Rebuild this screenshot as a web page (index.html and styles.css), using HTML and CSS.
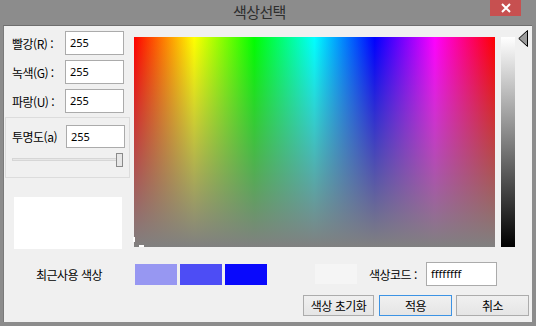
FILE: index.html
```html
<!DOCTYPE html>
<html lang="ko">
<head>
<meta charset="utf-8">
<link rel="stylesheet" href="styles.css">
</head>
<body>
<div class="window">
  <div class="titlebar">
    <div class="title">색상선택</div>
    <div class="close">
      <svg width="12" height="10" viewBox="0 0 12 10"><path d="M2 1 L10 9 M10 1 L2 9" stroke="#fff" stroke-width="2" fill="none"/></svg>
    </div>
  </div>
  <div class="content">
    <div class="top">
      <div class="leftcol">
        <div class="row"><span class="lbl">빨강(R) :</span><div class="input">255</div></div>
        <div class="row"><span class="lbl">녹색(G) :</span><div class="input">255</div></div>
        <div class="row"><span class="lbl">파랑(U) :</span><div class="input">255</div></div>
        <div class="group">
          <div class="grow"><span class="lbl">투명도(a)</span><div class="input small">255</div></div>
          <div class="slider"><div class="track"></div><div class="thumb"></div></div>
        </div>
        <div class="preview"></div>
      </div>
      <div class="spectrum">
        <div class="mark mark-v"></div>
        <div class="mark mark-h"></div>
      </div>
      <div class="graybar"></div>
      <div class="arrow">
        <svg width="11" height="18" viewBox="0 0 11 18"><polygon points="9.5,0.5 0.8,8.5 9.5,16.5" fill="#9a9a9a" stroke="#000" stroke-width="1"/></svg>
      </div>
    </div>
    <div class="recent">
      <div class="recent-lbl">최근사용 색상</div>
      <div class="sw sw1"></div>
      <div class="sw sw2"></div>
      <div class="sw sw3"></div>
      <div class="curbox"></div>
      <span class="code-lbl">색상코드 :</span>
      <div class="input code">ffffffff</div>
    </div>
    <div class="buttons">
      <div class="btn b1">색상 초기화</div>
      <div class="btn b2 active">적용</div>
      <div class="btn b3">취소</div>
    </div>
  </div>
</div>
</body>
</html>
```

FILE: styles.css
```css
* { box-sizing: border-box; }
html, body { margin: 0; padding: 0; }
body {
  width: 536px;
  height: 326px;
  background: #8c8c8c;
  font-family: "Noto Sans CJK KR", "Noto Sans", sans-serif;
  font-size: 12px;
  color: #000;
  overflow: hidden;
}
.window { display: flex; flex-direction: column; width: 536px; height: 326px; }
.titlebar {
  height: 25px;
  display: flex;
  align-items: flex-start;
}
.title {
  margin-left: 233px;
  margin-top: 1px;
  font-size: 15px;
  line-height: 21px;
  color: #2e2e2e;
  letter-spacing: -0.6px;
}
.close {
  margin-left: auto;
  margin-right: 15px;
  width: 31px;
  height: 16px;
  background: #c75050;
  display: flex;
  align-items: center;
  justify-content: center;
}
.content {
  margin-left: 3px;
  width: 529px;
  height: 297px;
  background: #f0f0f0;
  border-top: 1px solid #6e6e6e;
  border-left: 1px solid #7a7a7a;
  display: flex;
  flex-direction: column;
}
.top { display: flex; height: 226px; }
.leftcol {
  margin-left: 1px;
  width: 125px;
  padding-top: 5px;
  display: flex;
  flex-direction: column;
}
.row {
  display: flex;
  align-items: center;
  height: 24px;
  margin-bottom: 5px;
  padding-left: 7px;
}
.lbl { width: 53px; white-space: nowrap; letter-spacing: -0.5px; }
.input {
  width: 59px;
  height: 24px;
  background: #fff;
  border: 1px solid #ababab;
  font-family: "Noto Sans", sans-serif;
  font-size: 11px;
  line-height: 22px;
  padding-left: 4px;
}
.group {
  margin-top: -1px;
  width: 125px;
  height: 61px;
  border: 1px solid #dcdcdc;
  padding-top: 7px;
  padding-left: 6px;
}
.grow { display: flex; align-items: center; height: 23px; }
.grow .lbl { width: 54px; }
.input.small { height: 23px; line-height: 21px; }
.slider { position: relative; height: 14px; margin-top: 5px; margin-left: 0; width: 111px; }
.track {
  position: absolute; left: 0; right: 0; top: 5px; height: 3px;
  background: #e7e7e7; border: 1px solid #d6d6d6;
}
.thumb {
  position: absolute; left: 104px; top: 0; width: 7px; height: 14px;
  background: #e6e6e6; border: 1px solid #8a8a8a;
}
.preview {
  margin-top: 19px;
  margin-left: 9px;
  width: 108px;
  height: 52px;
  background: #fff;
}
.spectrum {
  position: relative;
  margin-left: 4px;
  margin-top: 11px;
  width: 361px;
  height: 210px;
  background:
    linear-gradient(to bottom, rgba(128,128,128,0), #808080),
    linear-gradient(to right, #f00, #ff0 16.67%, #0f0 33.33%, #0ff 50%, #00f 66.67%, #f0f 83.33%, #f00);
}
.mark { position: absolute; background: #fff; }
.mark-v { left: -1px; top: 200px; width: 2px; height: 5px; }
.mark-h { left: 5px; top: 208px; width: 5px; height: 2px; }
.graybar {
  margin-left: 6px;
  margin-top: 11px;
  width: 14px;
  height: 210px;
  background: linear-gradient(to bottom, #fff, #000);
}
.arrow { margin-left: 3px; margin-top: 4px; width: 11px; height: 18px; }
.arrow svg { display: block; }
.recent {
  display: flex;
  align-items: center;
  height: 24px;
  margin-top: 10px;
}
.recent-lbl { width: 130px; text-align: center; letter-spacing: -0.5px; }
.sw { width: 42px; height: 21px; margin-left: 3px; }
.sw1 { margin-left: 1px; background: #9797f2; }
.sw2 { background: #4d4df5; }
.sw3 { background: #0909fc; }
.curbox { margin-left: 48px; width: 42px; height: 20px; background: #f5f5f5; }
.code-lbl { margin-left: 12px; width: 57px; white-space: nowrap; letter-spacing: -0.5px; }
.input.code { width: 71px; }
.buttons {
  display: flex;
  justify-content: flex-end;
  margin-top: 9px;
  padding-right: 3px;
}
.btn {
  height: 21px;
  border: 1px solid #acacac;
  background: linear-gradient(#f0f0f0, #e5e5e5);
  text-align: center;
  line-height: 19px;
  letter-spacing: -0.5px;
}
.b1 { width: 71px; }
.b2 { width: 73px; margin-left: 5px; }
.b3 { width: 73px; margin-left: 4px; }
.btn.active { border-color: #3c93e4; }
```
